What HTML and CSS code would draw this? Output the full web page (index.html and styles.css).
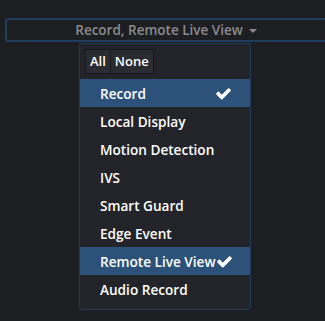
FILE: index.html
```html
<!DOCTYPE html>
<html lang="en">
<head>
    <meta charset="UTF-8">
    <meta name="viewport" content="width=device-width, initial-scale=1.0">
    <title>Event Type</title>
    <link rel="stylesheet" href="styles.css">
</head>
<body>
    <div class="picker">
        <button class="picker-toggle" type="button">
            <span>Record, Remote Live View</span>
            <span class="caret"></span>
        </button>

        <div class="picker-menu">
            <div class="btn-group">
                <button type="button" class="btn">All</button>
                <button type="button" class="btn">None</button>
            </div>

            <ul class="options">
                <li class="option selected">Record <svg class="check" viewBox="0 0 1792 1792"><path d="M1671 566q0 40-28 68l-724 724-136 136q-28 28-68 28t-68-28l-136-136-362-362q-28-28-28-68t28-68l136-136q28-28 68-28t68 28l294 295 656-657q28-28 68-28t68 28l136 136q28 28 28 68z"/></svg></li>
                <li class="option">Local Display</li>
                <li class="option">Motion Detection</li>
                <li class="option">IVS</li>
                <li class="option">Smart Guard</li>
                <li class="option">Edge Event</li>
                <li class="option selected">Remote Live View<svg class="check" viewBox="0 0 1792 1792"><path d="M1671 566q0 40-28 68l-724 724-136 136q-28 28-68 28t-68-28l-136-136-362-362q-28-28-28-68t28-68l136-136q28-28 68-28t68 28l294 295 656-657q28-28 68-28t68 28l136 136q28 28 28 68z"/></svg></li>
                <li class="option">Audio Record</li>
            </ul>
        </div>
    </div>
</body>
</html>
```

FILE: styles.css
```css
html, body {
    margin: 0;
    padding: 0;
    background-color: #1d1e22;
    overflow: hidden;
}

body {
    font-family: "Open Sans", Arial, sans-serif;
    height: 321px;
}

.picker {
    padding: 18px 0 0 5px;
}

.picker-toggle {
    display: flex;
    justify-content: center;
    align-items: center;
    gap: 6px;
    width: 322px;
    height: 24px;
    margin: 0;
    padding: 0;
    background-color: #1d1e22;
    border: 2px solid #213d5e;
    border-radius: 3px;
    color: #8a8a8c;
    font-family: inherit;
    font-size: 13.5px;
    font-weight: 600;
}

.caret {
    width: 0;
    height: 0;
    border-left: 4px solid transparent;
    border-right: 4px solid transparent;
    border-top: 4px solid #8a8a8c;
    margin-top: 1px;
}

.picker-menu {
    width: 170px;
    margin: 1px 0 0 74px;
    padding: 5px 0 6px;
    background-color: #232429;
    border: 1px solid #1f3b58;
    border-radius: 0 0 3px 3px;
}

.btn-group {
    display: flex;
    height: 25px;
    margin-left: 5px;
    margin-bottom: 5px;
}

.btn {
    height: 25px;
    padding: 0 4px;
    margin: 0;
    background-color: #2b2c31;
    border: 1px solid #18191c;
    color: #ffffff;
    font-family: inherit;
    font-size: 13px;
    font-weight: 600;
    line-height: 1;
}

.btn + .btn {
    border-left: none;
}

.options {
    list-style: none;
    margin: 0;
    padding: 0;
}

.option {
    display: flex;
    justify-content: space-between;
    align-items: center;
    height: 28px;
    padding: 0 18px 0 20px;
    color: #ffffff;
    font-size: 13.6px;
    font-weight: 600;
    white-space: nowrap;
}

.option.selected {
    background-color: #2c5279;
}

.check {
    flex-shrink: 0;
    width: 17px;
    height: 17px;
    fill: #ffffff;
}
```
